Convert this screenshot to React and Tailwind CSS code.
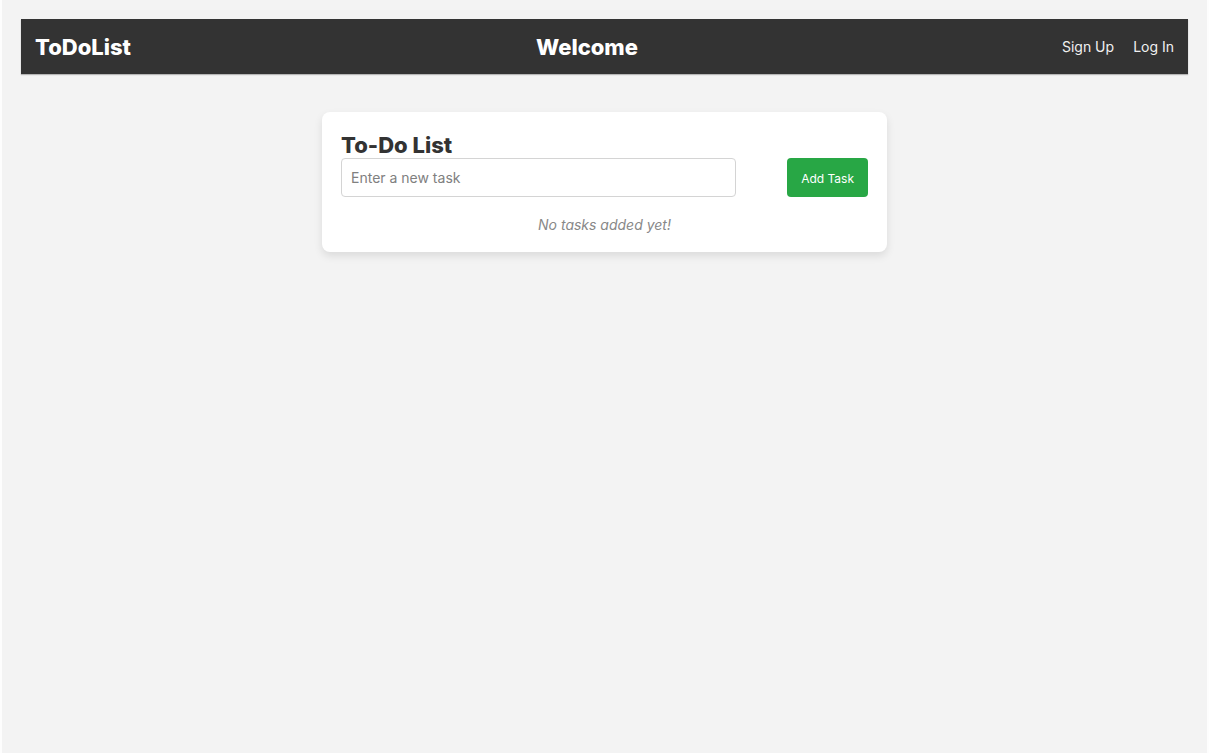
export default function App() {
  return (
    <div className="min-h-screen border-x-2 border-[#fdfdfd] bg-[#f3f3f3] px-[19px] pt-[19px] font-['Inter',sans-serif] text-[#333]">
      <header className="flex h-[55px] items-center justify-between bg-[#333] px-[14px] text-white shadow-[0_1px_1px_rgba(0,0,0,0.25)]">
        <a href="#" className="text-[22px] leading-7 font-extrabold">ToDoList</a>
        <h1 className="text-[22px] leading-7 font-extrabold">Welcome</h1>
        <nav className="flex text-sm text-[#f0f0f0]">
          <a href="#signup" className="ml-[19px]">Sign Up</a>
          <a href="#login" className="ml-[19px]">Log In</a>
        </nav>
      </header>
      <main className="mx-auto mt-[38px] max-w-[565px] rounded-lg bg-white px-[19px] pt-5 pb-[17px] shadow-[0_4px_8px_rgba(0,0,0,0.1)]">
        <h2 className="text-[22px] leading-[26px] font-extrabold">To-Do List</h2>
        <form className="flex justify-between" onSubmit={(e) => e.preventDefault()}>
          <input
            type="text"
            aria-label="New task"
            placeholder="Enter a new task"
            className="h-[39px] w-3/4 rounded-sm border border-[#d4d4d4] px-[9px] text-sm placeholder:text-[#808080]"
          />
          <button type="submit" className="h-[39px] rounded-sm bg-[#28a745] px-[14px] pt-0.5 text-xs text-white">
            Add Task
          </button>
        </form>
        <p className="mt-[18px] text-center text-sm text-[#888] italic">No tasks added yet!</p>
      </main>
    </div>
  );
}
